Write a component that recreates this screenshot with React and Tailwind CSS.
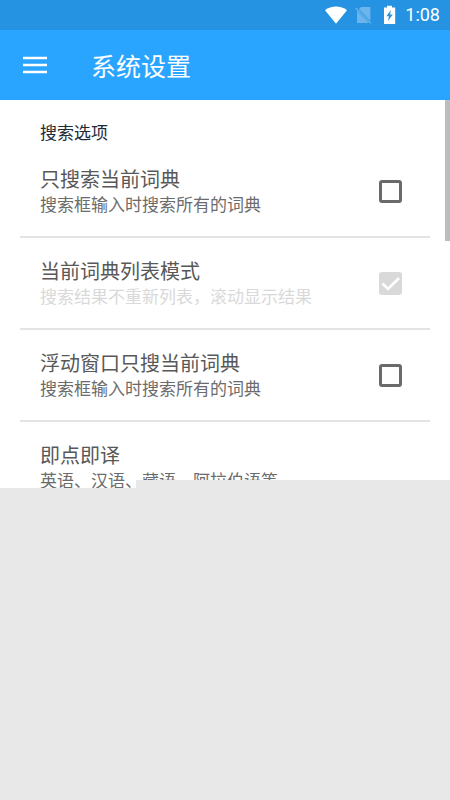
import React from "react";

const settings = [
  { id: "current", title: "只搜索当前词典", note: "搜索框输入时搜索所有的词典" },
  { id: "list", title: "当前词典列表模式", note: "搜索结果不重新列表，滚动显示结果", locked: true },
  { id: "floating", title: "浮动窗口只搜当前词典", note: "搜索框输入时搜索所有的词典" },
];

function StatusBar() {
  return (
    <div className="flex h-[30px] items-center justify-end bg-[#2592e2] pr-[10px] text-white">
      <svg className="mr-[8px] h-[18px] w-[22px]" viewBox="0 0 22 18" aria-hidden="true">
        <path d="M0 4.2C6 -0.8 16 -0.8 22 4.2L11 17.7Z" fill="currentColor" />
      </svg>
      <svg className="mr-[11px] h-[18px] w-[17px]" viewBox="0 0 17 18" aria-hidden="true">
        <path d="M2 4.8L14 17H2ZM3.8 3.2L6 1H15.4V15Z" fill="#6cb5ec" />
        <path d="M.6 2L16 17.4" stroke="#6cb5ec" strokeWidth="1.2" />
      </svg>
      <svg className="mr-[9px] h-[20px] w-[13px]" viewBox="0 0 13 20" aria-hidden="true">
        <path d="M1 2.5H4V.8H9V2.5H12.2V19H1Z" fill="currentColor" />
        <path d="M7.8 5L3.4 11.3H6L4.8 16.2L9.8 9.6H7.1Z" fill="#2592e2" />
      </svg>
      <span className="font-['Roboto',sans-serif] text-[18px] leading-[30px]">1:08</span>
    </div>
  );
}

function Setting({ id, title, note, locked }) {
  return (
    <li className="flex h-[92px] items-center justify-between border-b-2 border-[#e4e4e4] pr-[28px] pl-[20px]">
      <label htmlFor={id} className="flex flex-col">
        <span className="text-[20px] leading-[26px] text-[#585858]">{title}</span>
        <span className={`text-[17px] leading-[24px] ${locked ? "text-[#d9d9d9]" : "text-[#6c6c6c]"}`}>{note}</span>
      </label>
      <span className="grid shrink-0">
        <input
          id={id}
          type="checkbox"
          defaultChecked={locked}
          disabled={locked}
          className="peer col-start-1 row-start-1 size-[23px] appearance-none rounded-[3px] border-3 border-[#6a6a6a] disabled:border-[#d9d9d9] disabled:bg-[#d9d9d9]"
        />
        <svg
          className="pointer-events-none invisible col-start-1 row-start-1 size-[23px] peer-checked:visible"
          viewBox="0 0 23 23"
          aria-hidden="true"
        >
          <path d="M3.5 11.5L9 17L20 6" fill="none" stroke="white" strokeWidth="2.6" />
        </svg>
      </span>
    </li>
  );
}

export default function App() {
  return (
    <div className="min-h-screen bg-[#e8e8e8] font-['Noto_Sans_CJK_SC',sans-serif]">
      <header>
        <StatusBar />
        <div className="flex h-[70px] items-center bg-[#29a5ff] pl-[23px] text-white">
          <button type="button" aria-label="菜单" className="mr-[44px]">
            <svg className="h-[18px] w-[24px]" viewBox="0 0 24 18" aria-hidden="true">
              <path d="M0 2H24M0 9H24M0 16H24" stroke="currentColor" strokeWidth="2.4" />
            </svg>
          </button>
          <h1 className="text-[25px] leading-[36px]">系统设置</h1>
        </div>
      </header>
      <main className="relative flex h-[388px] overflow-hidden bg-white">
        <div className="flex-1 pt-[20px] pl-[20px]">
          <h2 className="mb-[2px] pl-[20px] text-[17px] leading-[24px] text-[#1d2b3a]">搜索选项</h2>
          <ul>
            {settings.map((s) => (
              <Setting key={s.id} {...s} />
            ))}
            <li className="flex h-[92px] flex-col justify-center border-b-2 border-[#e4e4e4] pl-[20px]">
              <span className="text-[20px] leading-[26px] text-[#585858]">即点即译</span>
              <span className="text-[17px] leading-[24px] text-[#6c6c6c]">英语、汉语、藏语、阿拉伯语等</span>
            </li>
          </ul>
        </div>
        <div className="ml-[15px] h-[141px] w-[5px] bg-[#bdbdbd]" />
        <div className="absolute right-0 bottom-0 left-[136px] h-[8px] bg-[#e8e8e8]" />
      </main>
    </div>
  );
}
